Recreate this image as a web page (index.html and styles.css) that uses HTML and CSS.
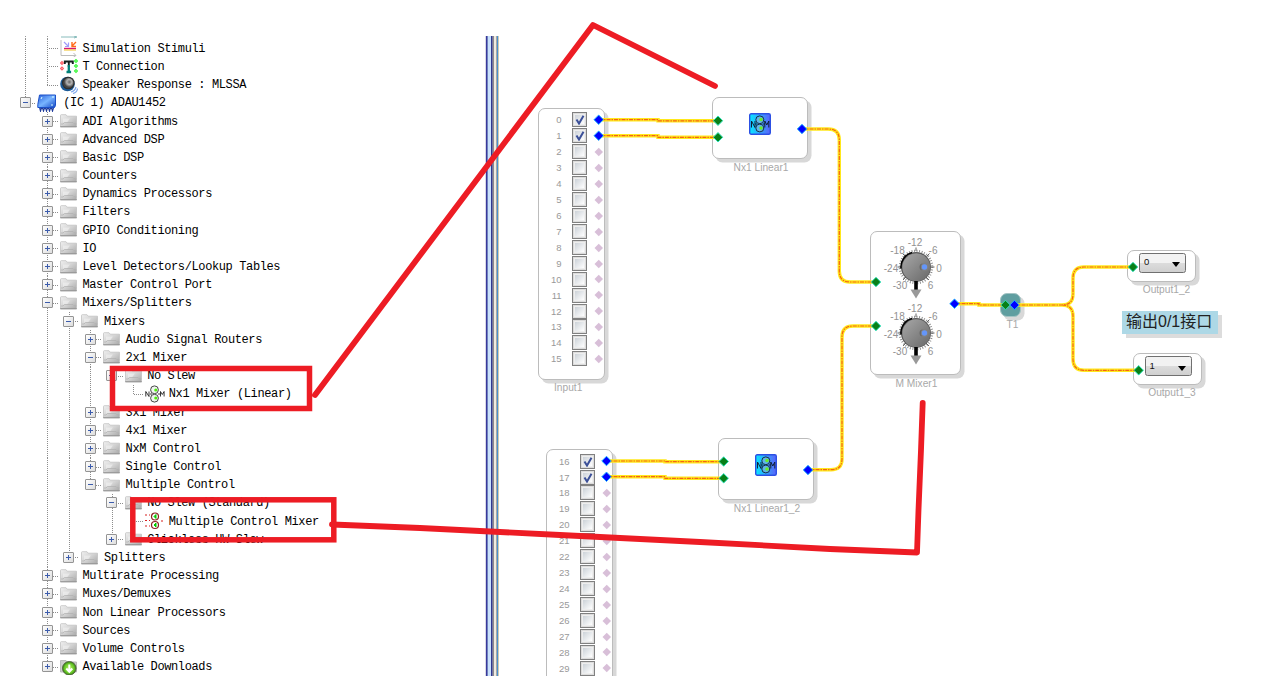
FILE: index.html
```
<!DOCTYPE html>
<html lang="zh-CN">
<head>
  <meta charset="UTF-8">
  <meta name="viewport" content="width=device-width, initial-scale=1.0">
  <title>Mixer Schematic</title>
  <link rel="stylesheet" href="styles.css">
</head>
<body>
  <!-- shared symbols -->
  <svg class="defs" width="0" height="0">
    <defs>
      <linearGradient id="gFolder" x1="0" y1="0" x2="1" y2="1">
        <stop offset="0" stop-color="#f0f0f0"/><stop offset=".5" stop-color="#d2d2d2"/><stop offset="1" stop-color="#a8a8a8"/>
      </linearGradient>
      <linearGradient id="gChip" x1="0" y1="0" x2="1" y2="1">
        <stop offset="0" stop-color="#2a62dc"/><stop offset=".5" stop-color="#78b4ff"/><stop offset="1" stop-color="#1448c4"/>
      </linearGradient>
      <linearGradient id="gNm"><stop offset="0" stop-color="#08e8ff"/><stop offset="1" stop-color="#5a62fa"/></linearGradient>
      <linearGradient id="gKnob" x1="0" y1="0" x2="1" y2="1">
        <stop offset="0" stop-color="#a8a8a8"/><stop offset="1" stop-color="#686868"/>
      </linearGradient>
      <radialGradient id="gBall"><stop offset="0" stop-color="#b8f060"/><stop offset=".7" stop-color="#68c828"/><stop offset="1" stop-color="#387818"/></radialGradient>
      <radialGradient id="gCone" cx=".6" cy=".4"><stop offset="0" stop-color="#666"/><stop offset=".5" stop-color="#b4b4b4"/><stop offset="1" stop-color="#444"/></radialGradient>
    </defs>
    <symbol id="folder" viewBox="0 0 18 16">
      <path d="M.5 14V2.500q0-.8.8-.8H6l1.200 1.500h9.300V14z" fill="url(#gFolder)" stroke="#c2c2c2" stroke-width=".8"/>
      <path d="M3 9.500V5.500H10L7 9.500z" fill="#f4f4f4" opacity=".6"/>
      <path d="M1 11h2l1.500-1.500H13l1.500 1.500h2" fill="none" stroke="#b0b0b0" stroke-width=".7"/>
      <path d="M.3 13.700h16.400" stroke="#949494"/>
    </symbol>
    <symbol id="stimuli" viewBox="0 0 18 18">
      <path d="M1 1v15.500h15M13.500 14l2.500 2.500-2.500 1.500" fill="none" stroke="#bcbcbc"/>
      <path d="M4 9.500h12" stroke="#d81870" stroke-width="1.400"/><path d="M4 11h12" stroke="#f0c020"/>
      <path d="M4 3l4 4M8.500 3.500v4H5" fill="none" stroke="#a09cf8" stroke-width="1.200"/>
      <path d="M16 3l-4 4M12 3v4.500H16" fill="none" stroke="#ff6a18" stroke-width="1.400"/>
    </symbol>
    <symbol id="tconn" viewBox="0 0 18 18">
      <path d="M4.800 7V4.500h8V7M8.800 4v6" fill="none" stroke="#16201e" stroke-width="1.900"/>
      <path d="M8.800 8v7M6.500 15h4.600" stroke="#008078" stroke-width="2.300"/>
      <g fill="none" stroke="#ff5c64" stroke-width="1.100"><path d="M.6 6L2 4.600 3.400 6 2 7.400zM.6 11.500L2 10.100 3.400 11.500 2 12.900z"/></g>
      <g fill="none" stroke="#38f838" stroke-width="1.100"><path d="M14.500 4L16 2.500 17.500 4 16 5.500zM14.500 9L16 7.500 17.500 9 16 10.500zM14.500 14L16 12.500 17.500 14 16 15.500z"/></g>
    </symbol>
    <symbol id="speaker" viewBox="0 0 18 18">
      <circle cx="7.500" cy="8" r="7.300" fill="#1c5a96"/>
      <circle cx="8.300" cy="7" r="6.300" fill="#2c2c2c"/>
      <circle cx="8.300" cy="7" r="5.200" fill="url(#gCone)"/>
      <path d="M11 16q4-1 5-5M13 17.500q4-1 4.500-5" fill="none" stroke="#80a8ec" stroke-width="1.200"/>
    </symbol>
    <symbol id="chip" viewBox="0 0 20 18">
      <path d="M2 11l1.500 6 1.500-5 1.500 5 1.500-5 1.500 5 1.500-5 1.500 5 1.500-5 1.500 5 1.500-5" fill="none" stroke="#203c9c" stroke-width="1.200"/>
      <path d="M2.500 1h16v10.500l-1 2H.8v-3z" fill="url(#gChip)" stroke="#1c50c8"/>
      <path d="M4 5l1-2M15 3h2M14 11h2" stroke="#dff" stroke-width="1"/>
    </symbol>
    <symbol id="nm" viewBox="0 0 20 18">
      <path d="M.8 11.500v-5l3.200 5v-5M15.500 11.500v-5l1.800 3 1.800-3v5M5 9h2M13 9h2" fill="none" stroke="#222" stroke-width=".9"/>
      <circle cx="9.500" cy="4.800" r="3.900" fill="#eef6ee" stroke="#333" stroke-width=".9"/><circle cx="9.500" cy="13.200" r="3.900" fill="#eef6ee" stroke="#333" stroke-width=".9"/>
      <circle cx="10.800" cy="5" r="1.600" fill="#50ee10"/><circle cx="10.800" cy="13" r="1.600" fill="#50ee10"/>
    </symbol>
    <symbol id="multi" viewBox="0 0 20 18">
      <path d="M0 3h2M4 3h1M0 8.500h2M4 8.500h1M0 14h2M4 14h1M16 9h2" stroke="#d82020" stroke-width="1.200"/>
      <circle cx="10" cy="4.500" r="3.500" fill="#fff" stroke="#8c2424" stroke-width="1.200"/><circle cx="10" cy="13" r="3.500" fill="#fff" stroke="#8c2424" stroke-width="1.200"/>
      <path d="M9 4.500l2-2v4zM9 13l2-2v4z" fill="#0c0" stroke="#0c0"/>
    </symbol>
    <symbol id="download" viewBox="0 0 18 16">
      <path d="M.5 13V1.500H6L7.200 3h9.300v10z" fill="#ccc" stroke="#bbb"/>
      <circle cx="9.300" cy="9.300" r="6.800" fill="url(#gBall)" stroke="#50643c" stroke-width=".9"/>
      <path d="M9.300 5.500v7M6.300 9.500l3 3.300 3-3.300" fill="none" stroke="#fff" stroke-width="2"/>
    </symbol>
    <symbol id="nmBlock" viewBox="0 0 22 22">
      <rect x=".7" y=".7" width="20.600" height="20.600" rx="1.500" fill="url(#gNm)" stroke="#2c50e4" stroke-width="1.400"/>
      <path d="M2.500 14.500V8l3.500 6.500V8M15.800 14.500V8l2 4 2-4v6.500M6 11h2M14 11h2" fill="none" stroke="#102038" stroke-width="1"/>
      <ellipse cx="10.800" cy="6.800" rx="4" ry="3.900" fill="#60b4e8" stroke="#102038" stroke-width=".9"/>
      <ellipse cx="10.800" cy="15" rx="4" ry="3.900" fill="#60b4e8" stroke="#102038" stroke-width=".9"/>
      <circle cx="12" cy="6.500" r="1.700" fill="#68f020"/><circle cx="12" cy="15" r="1.700" fill="#68f020"/>
    </symbol>
    <symbol id="knob" viewBox="-40 -33 80 66">
      <circle r="16.200" fill="none" stroke="#888" stroke-width="2.200" stroke-dasharray=".9 1.650"/>
      <path d="M0-19.500V-16M18.500 0H15M-18.500 0H-15M-13.500-13.500l3 3M13.500-13.500l-3 3M-13 13l3-3M13 13l-3-3" stroke="#666"/>
      <circle r="15" fill="#585858"/>
      <path d="M-15 1.500A15 15 0 0 1-4-14.500" fill="none" stroke="#000" stroke-width="1.500"/>
      <circle cx=".3" cy=".3" r="14" fill="url(#gKnob)"/>
      <circle cx="8.200" cy="0" r="4.300" fill="#808080"/><path d="M5.500 3.200a4.300 4.300 0 0 1 0-6.400" fill="none" stroke="#606060"/>
      <circle cx="8.500" cy="0" r="2.700" fill="#6496fa"/>
      <path d="M0 14v9" stroke="#000" stroke-width="3.600"/>
      <path d="M-5.500 22.500h11L0 31.500z" fill="#999"/>
    </symbol>
    <symbol id="in" viewBox="-5 -5 10 10"><path d="M0-4.300L4.300 0 0 4.300-4.300 0z" fill="#088018" stroke="#30e4c0" stroke-width=".9"/></symbol>
    <symbol id="out" viewBox="-5 -5 10 10"><path d="M0-4.300L4.300 0 0 4.300-4.300 0z" fill="#0000ff" stroke="#20b4ff" stroke-width=".9"/></symbol>
  </svg>

  <div class="page">
    <div class="tree">
      <svg class="cut" width="80" height="3"><path d="M10.500 0v3M32.500 0v3" stroke="#999" stroke-dasharray="1 1"/><path d="M46 1h15M59 0l3 1-3 1" fill="none" stroke="#88bcbc"/></svg>
      <div id="tree"></div>
    </div>
    <div class="splitter"></div>
    <div class="canvas">
      <div class="node input input-a"><div class="box" id="inputA"></div><div class="caption">Input1</div></div>
      <div class="node input input-b"><div class="box" id="inputB"></div></div>

      <div class="node linear linear-a">
        <div class="box"><svg width="22" height="22"><use href="#nmBlock"/></svg></div>
        <div class="caption">Nx1 Linear1</div>
      </div>
      <div class="node linear linear-b">
        <div class="box"><svg width="22" height="22"><use href="#nmBlock"/></svg></div>
        <div class="caption">Nx1 Linear1_2</div>
      </div>

      <div class="node mixer">
        <div class="box">
          <svg width="80" height="66">
            <use href="#knob"/>
            <g class="scale">
              <text x="39" y="12">-12</text><text x="21.500" y="19.500">-18</text><text x="57" y="19.500">-6</text>
              <text x="15" y="37.500">-24</text><text x="63" y="37.500">0</text>
              <text x="24" y="54.500">-30</text><text x="54.500" y="54.500">6</text>
            </g>
          </svg>
          <svg width="80" height="66">
            <use href="#knob"/>
            <g class="scale">
              <text x="39" y="12">-12</text><text x="21.500" y="19.500">-18</text><text x="57" y="19.500">-6</text>
              <text x="15" y="37.500">-24</text><text x="63" y="37.500">0</text>
              <text x="24" y="54.500">-30</text><text x="54.500" y="54.500">6</text>
            </g>
          </svg>
        </div>
        <div class="caption">M Mixer1</div>
      </div>

      <div class="node tee"><div class="box"></div><div class="caption">T1</div></div>

      <div class="node output output-a">
        <div class="box"><div class="select">0<i></i></div></div>
        <div class="caption">Output1_2</div>
      </div>
      <div class="node output output-b">
        <div class="box"><div class="select">1<i></i></div></div>
        <div class="caption">Output1_3</div>
      </div>
      <div class="note">输出0/1接口</div>
    </div>

    <svg class="overlay" width="1276" height="676" id="wires">
      <defs>
        <path id="wireSet" d="M599 119.700H658V120.800H718M599 135.700H658V137.300H718M606 461H665V461.700H724M606 476.700H665V478.300H724
          M802 129H828Q839.300 129 839.300 140V271Q839.300 282 850 282H876
          M808 469.700H831Q842 469.700 842 459V337Q842 326 853 326H876
          M954 303.700H979V305H1005M1014 305H1062Q1073 305 1073 294V278Q1073 267 1084 267H1133
          M1062 305Q1073 305 1073 316V359Q1073 370.300 1084 370.300H1138"/>
      </defs>
      <use href="#wireSet" class="wire"/>
      <use href="#wireSet" class="wire-dash"/>
    </svg>

    <!-- hand drawn marks -->
    <svg class="overlay marks" width="1276" height="676">
      <rect x="112.500" y="368.500" width="197" height="40"/>
      <rect x="132.800" y="499.800" width="201" height="40"/>
      <path d="M315 395L593 25L715 86"/>
      <path d="M332 524.500L420 528L560 535L700 542L830 549L917 552.500L918.500 510L921 450L922.700 403"/>
    </svg>
  </div>

  <script>
    // guides: | line, . blank, t tee, l corner, + - expander, p m expander of the last child
    const rows = [
      ["|t", "stimuli", "Simulation Stimuli"],
      ["|t", "tconn", "T Connection"],
      ["|l", "speaker", "Speaker Response : MLSSA"],
      ["m", "chip", "(IC 1) ADAU1452"],
      [".+", "folder", "ADI Algorithms"],
      [".+", "folder", "Advanced DSP"],
      [".+", "folder", "Basic DSP"],
      [".+", "folder", "Counters"],
      [".+", "folder", "Dynamics Processors"],
      [".+", "folder", "Filters"],
      [".+", "folder", "GPIO Conditioning"],
      [".+", "folder", "IO"],
      [".+", "folder", "Level Detectors/Lookup Tables"],
      [".+", "folder", "Master Control Port"],
      [".-", "folder", "Mixers/Splitters"],
      [".|-", "folder", "Mixers"],
      [".||+", "folder", "Audio Signal Routers"],
      [".||-", "folder", "2x1 Mixer"],
      [".|||m", "folder", "No Slew"],
      [".|||.l", "nm", "Nx1 Mixer (Linear)"],
      [".||+", "folder", "3x1 Mixer"],
      [".||+", "folder", "4x1 Mixer"],
      [".||+", "folder", "NxM Control"],
      [".||+", "folder", "Single Control"],
      [".||m", "folder", "Multiple Control"],
      [".||.-", "folder", "No Slew (Standard)"],
      [".||.|l", "multi", "Multiple Control Mixer"],
      [".||.p", "folder", "Clickless HW Slew"],
      [".|p", "folder", "Splitters"],
      [".+", "folder", "Multirate Processing"],
      [".+", "folder", "Muxes/Demuxes"],
      [".+", "folder", "Non Linear Processors"],
      [".+", "folder", "Sources"],
      [".+", "folder", "Volume Controls"],
      [".p", "download", "Available Downloads"]
    ];
    const cell = {
      "|": '<span class="g line"></span>',
      ".": '<span class="g"></span>',
      "t": '<span class="g line arm"></span>',
      "l": '<span class="g half arm"></span>',
      "+": '<span class="g line arm"><b class="exp plus"></b></span>',
      "-": '<span class="g line arm"><b class="exp"></b></span>',
      "p": '<span class="g half arm"><b class="exp plus"></b></span>',
      "m": '<span class="g half arm"><b class="exp"></b></span>'
    };
    document.getElementById("tree").innerHTML = rows.map(r =>
      '<div class="row">' + [...r[0]].map(c => cell[c]).join("") +
      '<svg class="icon ' + r[1] + '"><use href="#' + r[1] + '"/></svg><span class="name">' + r[2] + '</span></div>'
    ).join("");

    function channels(id, from, to) {
      let html = "";
      for (let i = from; i <= to; i++) {
        const on = i % 16 < 2;
        html += '<div class="channel"><span class="num">' + i + '</span><span class="check">' +
          (on ? '<svg width="10" height="10"><path d="M1.500 4.500L4 8.500 8.500 .8"/></svg>' : "") +
          '</span><span class="port"></span></div>';
      }
      document.getElementById(id).innerHTML = html;
    }
    channels("inputA", 0, 15);
    channels("inputB", 16, 29);

    // connected ports
    const ports = {
      in: [[718, 120.7], [718, 137.3], [723.7, 461.5], [723.7, 478.3], [876, 282], [876, 326], [1005.5, 305], [1133, 267], [1138.7, 370.3]],
      out: [[598.7, 119.7], [598.7, 135.7], [606.5, 461], [606.5, 476.8], [802, 129], [808, 470], [954.5, 303.7], [1014.5, 305]]
    };
    let marks = "";
    for (const kind in ports) {
      ports[kind].forEach(p => {
        marks += '<use href="#' + kind + '" x="' + (p[0] - 5.5) + '" y="' + (p[1] - 5.5) + '" width="11" height="11"/>';
      });
    }
    document.getElementById("wires").innerHTML += marks;
  </script>
</body>
</html>
```
FILE: styles.css
```
body {
  margin: 0;
  background: #fff;
  overflow: hidden;
}
.defs {
  position: absolute;
}
.page {
  position: relative;
  width: 1276px;
  height: 640px;
  padding-top: 36px;
  display: grid;
  grid-template-columns: 485px 14px 1fr;
  overflow: hidden;
}

/* Tree */
.tree {
  padding-left: 14.7px;
  font-family: "Liberation Mono", monospace;
  font-size: 12px;
  letter-spacing: -.38px;
  color: #000;
  height: 640px;
  box-sizing: border-box;
  overflow: hidden;
}
.cut {
  display: block;
  margin-bottom: .2px;
}
.row {
  display: flex;
  align-items: center;
  height: 18.19px;
  white-space: pre;
}
.name {
  padding-top: 1px;
}
.g {
  flex: none;
  width: 21.6px;
  height: 18.19px;
  display: flex;
  align-items: center;
  justify-content: center;
  background-repeat: no-repeat;
}
.line, .half {
  --v: repeating-linear-gradient(#8c8c8c 0 1px, #fff 1px 2px);
  background-image: var(--v);
  background-size: 1px 100%;
  background-position: 10.8px 0;
}
.half {
  background-size: 1px 50%;
}
.arm {
  --h: repeating-linear-gradient(90deg, #8c8c8c 0 1px, #fff 1px 2px);
  background-image: var(--v), var(--h);
  background-size: 1px 100%, 11px 1px;
  background-position: 10.8px 0, 11px 9px;
}
.half.arm {
  background-size: 1px 50%, 11px 1px;
}
.exp {
  width: 9px;
  height: 9px;
  border: 1px solid #949494;
  border-radius: 1px;
  background: linear-gradient(#3c5cac, #3c5cac) center / 5px 1px no-repeat, linear-gradient(135deg, #fff, #ddd);
}
.exp.plus {
  background: linear-gradient(#3c5cac, #3c5cac) center / 5px 1px no-repeat, linear-gradient(#3c5cac, #3c5cac) center / 1px 5px no-repeat, linear-gradient(135deg, #fff, #ddd);
}
.icon {
  flex: none;
  width: 18px;
  height: 16px;
  margin: 0 4.5px 0 2px;
  overflow: visible;
}
.icon.stimuli, .icon.tconn, .icon.speaker {
  height: 18px;
}
.icon.chip {
  width: 20px;
  height: 18px;
  margin: 0 6px 0 1px;
}
.icon.nm, .icon.multi {
  width: 20px;
  height: 18px;
  margin: 0 4px 0 .5px;
}

.splitter {
  background: linear-gradient(90deg, #d8d8e4 0 1px, #38389c 1px 2px, #7080bc 2px 3px, #c8e0fc 3px 6px, #303890 6px 7px, #7478a0 7px 8px, #8c8890 8px 9px, #f0ece0 9px 11px, #a8a8a8 11px 12px, #4890d0 12px 13px, #d0ccb4 13px);
}

/* Schematic */
.node {
  position: absolute;
  font: 10.2px "Liberation Sans", Arial, sans-serif;
  color: #a8a8a8;
}
.box {
  box-sizing: border-box;
  background: #fff;
  border: 1.5px solid #bcbcbc;
  border-radius: 7px;
  box-shadow: 3.5px 3.5px 0 #d8d8d8;
}
.caption {
  text-align: center;
  line-height: 12px;
  white-space: nowrap;
  margin-top: 3px;
}
.input { width: 67px; }
.input .box {
  height: 272px;
  padding: 3.5px 0 0 15px;
}
.input .caption {
  text-align: left;
  padding-left: 16px;
  margin-top: 2px;
}
.input-a { left: 538px; top: 107.500px; }
.input-b { left: 546px; top: 448.700px; }
.channel {
  display: flex;
  align-items: center;
  height: 15.93px;
}
.num {
  width: 7.5px;
  display: flex;
  justify-content: flex-end;
  font-size: 9.5px;
  color: #999;
}
.check {
  width: 9px;
  height: 9px;
  margin-left: 10px;
  border: 1px solid #808080;
  outline: 1px solid #dcdcdc;
  outline-offset: -2px;
  padding: 2px;
  background: linear-gradient(135deg, #ccd2d8, #fff) center / 9px 9px no-repeat, #eee;
  display: flex;
}
.check svg {
  fill: none;
  stroke: #3c5098;
  stroke-width: 2;
  overflow: visible;
}
.port {
  width: 5.5px;
  height: 5.5px;
  margin-left: 9.3px;
  background: #d8bfd8;
  transform: rotate(45deg);
}
.linear { width: 96px; }
.linear .box {
  height: 62px;
  display: flex;
  justify-content: center;
  padding-top: 15px;
}
.linear .caption {
  padding-left: 2px;
}
.linear-a { left: 712px; top: 96.500px; }
.linear-b { left: 718px; top: 437.500px; }
.mixer {
  left: 870px;
  top: 230.500px;
  width: 91px;
}
.mixer .box {
  height: 144px;
  display: flex;
  flex-direction: column;
  align-items: center;
  padding: 2.5px 0 0 1px;
}
.mixer .caption {
  padding-left: 2px;
}
.scale {
  font-size: 10px;
  fill: #929292;
  text-anchor: middle;
}
.tee {
  left: 1000px;
  top: 293px;
  width: 21px;
}
.tee .box {
  height: 24px;
  background: #5f9ea0;
  border-color: #a4c4c4;
}
.tee .caption {
  padding-left: 4px;
  margin-top: 2px;
}
.output { width: 69px; }
.output .box {
  height: 32px;
  padding: 2px 0 0 11px;
}
.output .caption {
  padding-left: 10px;
  margin-top: 2px;
}
.output-a { left: 1127px; top: 249.500px; }
.output-b { left: 1132.500px; top: 353.200px; }
.select {
  box-sizing: border-box;
  width: 47px;
  height: 20px;
  padding: 0 5px 2px 4px;
  display: flex;
  align-items: center;
  justify-content: space-between;
  border: 1px solid #707070;
  border-radius: 2.5px;
  background: linear-gradient(#f2f2f2 50%, #dcdcdc 50%, #d0d0d0);
  color: #111;
  font-size: 9.5px;
}
.select i {
  border: 4.5px solid transparent;
  border-top: 5px solid #000;
  border-bottom: 0;
  margin-top: 6px;
}
.note {
  position: absolute;
  left: 1122px;
  top: 311px;
  width: 92px;
  height: 22.5px;
  padding-left: 4px;
  line-height: 21px;
  font-family: "Liberation Sans", "Noto Sans CJK SC", sans-serif;
  font-size: 16px;
  color: #222;
  white-space: nowrap;
  background: #add8e6;
  box-shadow: 4px 4px 0 #dcdcdc;
}

.overlay {
  position: absolute;
  left: 0;
  top: 0;
}
.wire {
  fill: none;
  stroke: #ffe81c;
  stroke-width: 3.4;
}
.wire-dash {
  fill: none;
  stroke: #f46414;
  stroke-width: 1.2;
  stroke-dasharray: 4 1 1.500 1;
}
.marks {
  fill: none;
  stroke: #ed1c24;
  stroke-width: 5.8;
  stroke-linecap: round;
  stroke-linejoin: round;
}
.marks rect {
  stroke-width: 5.5;
  stroke-linejoin: miter;
}
```
